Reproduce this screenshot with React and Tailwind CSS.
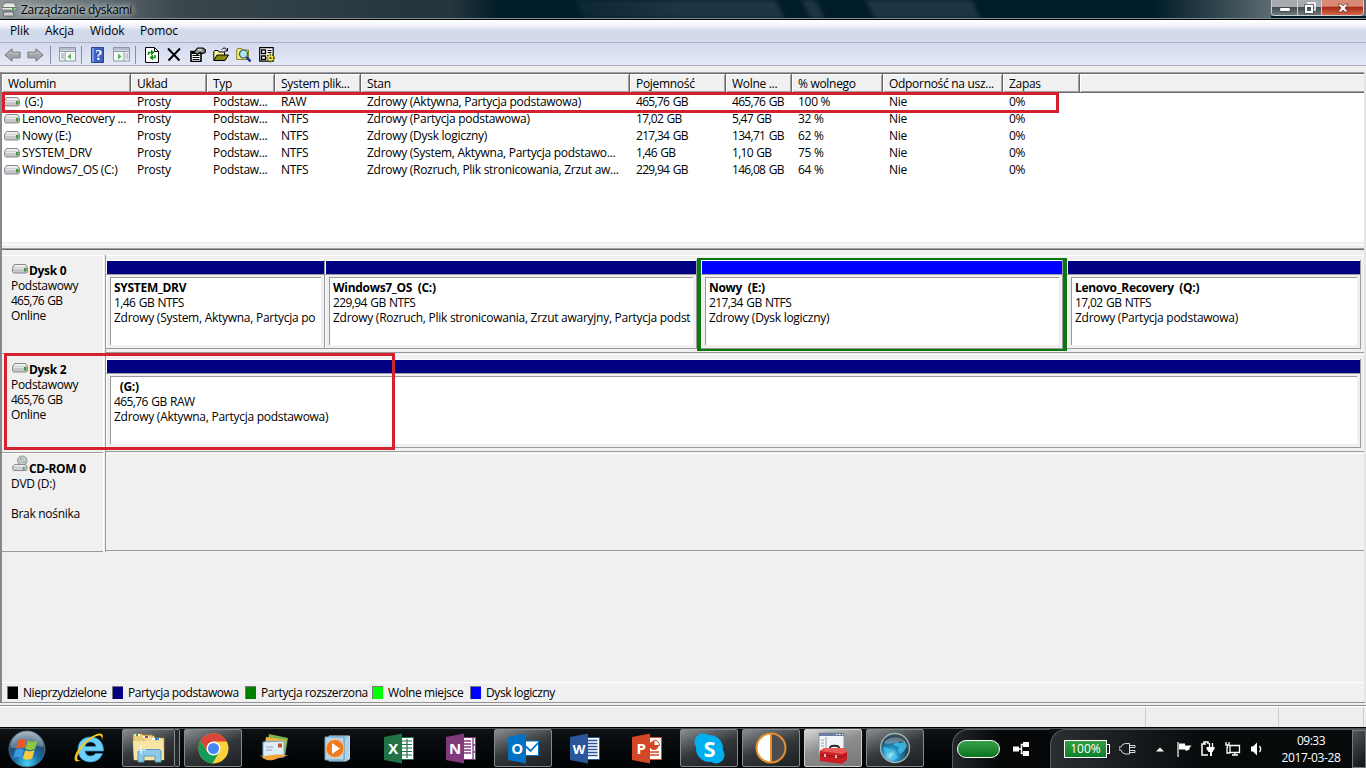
import React from "react";

const columns = [
  { title: "Wolumin", width: "w-[129px]" },
  { title: "Układ", width: "w-[76px]" },
  { title: "Typ", width: "w-[68px]" },
  { title: "System plik...", width: "w-[86px]" },
  { title: "Stan", width: "w-[269px]" },
  { title: "Pojemność", width: "w-[96px]" },
  { title: "Wolne ...", width: "w-[66px]" },
  { title: "% wolnego", width: "w-[91px]" },
  { title: "Odporność na usz...", width: "w-[120px]" },
  { title: "Zapas", width: "w-[77px]" },
];

const volumes = [
  ["\u00a0(G:)", "Prosty", "Podstaw...", "RAW", "Zdrowy (Aktywna, Partycja podstawowa)", "465,76 GB", "465,76 GB", "100 %", "Nie", "0%"],
  ["Lenovo_Recovery ...", "Prosty", "Podstaw...", "NTFS", "Zdrowy (Partycja podstawowa)", "17,02 GB", "5,47 GB", "32 %", "Nie", "0%"],
  ["Nowy (E:)", "Prosty", "Podstaw...", "NTFS", "Zdrowy (Dysk logiczny)", "217,34 GB", "134,71 GB", "62 %", "Nie", "0%"],
  ["SYSTEM_DRV", "Prosty", "Podstaw...", "NTFS", "Zdrowy (System, Aktywna, Partycja podstawo...", "1,46 GB", "1,10 GB", "75 %", "Nie", "0%"],
  ["Windows7_OS (C:)", "Prosty", "Podstaw...", "NTFS", "Zdrowy (Rozruch, Plik stronicowania, Zrzut aw...", "229,94 GB", "146,08 GB", "64 %", "Nie", "0%"],
];

const legend = [
  { label: "Nieprzydzielone", color: "bg-black", width: "w-[105px]" },
  { label: "Partycja podstawowa", color: "bg-[#000080]", width: "w-[133px]" },
  { label: "Partycja rozszerzona", color: "bg-[#008000]", width: "w-[127px]" },
  { label: "Wolne miejsce", color: "bg-[#00ff00]", width: "w-[98px]" },
  { label: "Dysk logiczny", color: "bg-[#0000ff]", width: "w-[120px]" },
];

const DriveIcon = () => (
  <svg width="16" height="10" viewBox="0 0 16 10" className="shrink-0">
    <path d="M2.500 .5h11l2 3v4l-1 1.500H1.500l-1-1.500v-4z" fill="#c6c6cb" stroke="#808085" strokeWidth=".9" />
    <path d="M3 1h10l1.500 2.300h-13z" fill="#ededee" />
    <path d="M1.500 4h12v1h-12z" fill="#e9e9ed" />
    <rect x="12" y="4" width="2.500" height="3.500" fill="#3f9a3c" />
  </svg>
);

const CdIcon = () => (
  <svg width="16" height="17" viewBox="0 0 17 17" className="shrink-0">
    <circle cx="11" cy="5.500" r="5" fill="#c8cdca" stroke="#8b908d" />
    <path d="M11 5.500L8 1.500M11 5.500l4 2" stroke="#7bb98a" strokeWidth="1.300" />
    <circle cx="11" cy="5.500" r="1.400" fill="#fff" stroke="#777" strokeWidth=".6" />
    <path d="M3 9.500h11l2 2v3l-1 1.500H2L.8 14.500V11.500z" fill="#cfcfd2" stroke="#77777c" strokeWidth=".9" />
    <path d="M3 10h10l1 1.500H2z" fill="#f5f5f5" />
    <rect x="11.500" y="12.500" width="2" height="2.500" fill="#2fa12f" />
  </svg>
);

const TitleBar = () => (
  <div className="flex h-5 shrink-0 flex-col border-b border-black bg-[#7f8f95]">
    <div className="flex h-[18px] overflow-hidden bg-[#011c29]">
      <div className="flex w-[450px] items-center bg-linear-to-r from-[#8f999c] via-[#3a474d] via-40% to-[#26363e] to-90% pl-0.5">
        <svg width="15" height="15" viewBox="0 0 15 15">
          <path d="M3 1h9l2 4v3H0V5z" fill="#e8e8e8" stroke="#666" strokeWidth=".7" />
          <path d="M0 5.500h14M2 10h9l1 4H1z" fill="#d4d4d4" stroke="#555" strokeWidth=".8" />
          <rect x="10" y="5.500" width="2.500" height="2" fill="#35a335" />
        </svg>
        <span className="relative top-px ml-1 [text-shadow:0_0_6px_#dfe5e6,0_0_5px_#c0c8ca,0_0_12px_#b0b8ba]">Zarządzanie dyskami</span>
      </div>
      <div className="w-[50px] bg-linear-to-r from-[#26363e] to-[#011c29]" />
      <div className="w-[80px]" />
      <div className="w-[200px] skew-x-[25deg] bg-linear-to-r from-[#0c2834] via-[#1c3642] to-[#1c3642] to-90% blur-[2px]" />
      <div className="w-[26px]" />
      <div className="w-[14px] skew-x-[25deg] bg-[#1c3642] blur-[2px]" />
      <div className="w-[50px]" />
      <div className="w-[106px] skew-x-[25deg] bg-[#1c3642] blur-[2px]" />
      <div className="grow bg-linear-to-r from-[#011c29] from-60% to-[#5d6b70]" />
      <div className="flex h-4 w-[95px] bg-[#5d6b70] pr-0.5">
        <div className="flex h-full grow overflow-hidden rounded-b border border-t-0 border-[#c9d0d2]">
          <div className="flex w-[26px] items-end justify-center border-r border-[#c9d0d2] bg-linear-to-b from-[#a5abae] from-45% via-[#444c50] via-50% to-[#6f7a7f] pb-[3px]">
            <div className="h-[5px] w-[12px] rounded-xs border border-[#42484c] bg-white" />
          </div>
          <div className="flex w-6 items-center justify-center border-r border-[#c9d0d2] bg-linear-to-b from-[#a5abae] from-45% via-[#444c50] via-50% to-[#6f7a7f]">
            <svg width="12" height="12" viewBox="0 0 12 12" fill="none">
              <path d="M4 2.500V1h7v7H9.500" stroke="#fff" strokeWidth="1.500" />
              <path d="M2 4h6v6H2z" stroke="#fff" strokeWidth="2" />
              <path d="M.5 2.500h9v9h-9z" stroke="#41474b" strokeWidth=".6" />
            </svg>
          </div>
          <div className="flex grow items-center justify-center bg-linear-to-b from-[#d98a77] from-40% via-[#a82a14] via-50% to-[#d5664a]">
            <svg width="12" height="10" viewBox="0 0 12 10">
              <path d="M1 1h3l2 2 2-2h3L8 5l3 4H8L6 7 4 9H1l3-4z" fill="#fff" stroke="#5a2f2a" strokeWidth=".7" />
            </svg>
          </div>
        </div>
      </div>
    </div>
  </div>
);

const Arrow = ({ flip }) => (
  <svg width="17" height="16" viewBox="0 0 18 16" className={flip ? "-scale-x-100" : ""}>
    <path d="M1 8l7.500-6.500V5H17v6H8.500v3.500z" fill="#a3a6a9" stroke="#6d7073" />
    <path d="M3.500 7.500L7.500 4v2.200H16" fill="none" stroke="#c9cbce" />
  </svg>
);

const PaneIcon = ({ right }) => (
  <svg width="17" height="15" viewBox="0 0 17 15">
    <path d="M.5.5h16v13.500H.5z" fill="#f6f8f9" stroke="#8e99a6" />
    <path d="M1 1h15v2.500H1z" fill="#b2bcc8" />
    <path d="M1 4.500h15" stroke="#8e99a6" />
    {right ? (
      <>
        <path d="M11 5v9M12.500 7h3M12.500 9h3M12.500 11h3" stroke="#8e99a6" />
        <path d="M5 6.500v6l3.500-3z" fill="#4cb748" />
      </>
    ) : (
      <>
        <path d="M6 5v9M2 7h3M2 9h3M2 11h3" stroke="#8e99a6" />
        <path d="M12 6.500v6L8.500 9.500z" fill="#4cb748" />
      </>
    )}
  </svg>
);

const Separator = () => <div className="h-[18px] w-px bg-[#8b90a0]" />;

const Toolbar = () => (
  <div className="flex h-[23px] shrink-0 items-center border-b border-[#a9aec4] bg-linear-to-b from-[#d3daee] to-[#e4e8f6] pt-px pl-1">
    <Arrow />
    <div className="mr-1.5 ml-1.5 flex"><Arrow flip /></div>
    <Separator />
    <div className="ml-[8px] mr-[5px]"><PaneIcon /></div>
    <Separator />
    <svg width="13" height="16" viewBox="0 0 13 16" className="ml-[9px]">
      <path d="M.5.5h12v15H.5z" fill="#3b62c4" stroke="#27458f" />
      <path d="M1 1h2v14H1z" fill="#7f9be0" />
      <text x="7.500" y="12.500" textAnchor="middle" fontSize="14" fontWeight="bold" fill="#fff" fontFamily="Liberation Serif, serif">?</text>
    </svg>
    <div className="mr-[5px] ml-[9px]"><PaneIcon right /></div>
    <Separator />
    <svg width="14" height="16" viewBox="0 0 14 16" className="ml-[9px]">
      <path d="M.5.5h9l4 4v11H.5z" fill="#fff" stroke="#000" />
      <path d="M9.500.5v4h4" fill="none" stroke="#000" />
      <path d="M3.500 8V5.500h3M10 8v2.500H7.500" fill="none" stroke="#169016" strokeWidth="1.500" />
      <path d="M6 2.500v6L9.500 5.500zM8 7.500v6L4.500 10.500z" fill="#169016" />
    </svg>
    <svg width="14" height="15" viewBox="0 0 14 15" className="ml-2">
      <path d="M1 1.500l11.500 12M13 1.500L1.500 13.500" stroke="#000" strokeWidth="1.900" />
    </svg>
    <svg width="16" height="15" viewBox="0 0 16 15" className="ml-[9px]">
      <path d="M1 4.500h10v10H1z" fill="#fff" stroke="#000" strokeWidth="1.600" />
      <path d="M1.500 5h9v2h-9z" />
      <path d="M2.500 8.500h7M2.500 10.500h7M2.500 12.500h7" stroke="#000" strokeWidth="1.200" />
      <path d="M4 5.500L7.500 1H13l2.500 2-.5 2.500-3 1-2-1-2.500 2z" fill="#8f8f8f" stroke="#000" strokeWidth="1.200" />
      <path d="M8 2.800h4" stroke="#fff" />
    </svg>
    <svg width="16" height="15" viewBox="0 0 16 15" className="ml-[7px]">
      <path d="M.8 13V4.500L2 3.500h3l1 1.500h5.500v3" fill="#fff9a0" stroke="#000" />
      <path d="M.8 13.500L4 8h11.500l-3.500 5.500z" fill="#8c8a16" stroke="#000" />
      <path d="M9 2.500c1-2 4-2 5 .5M14.500 1v3h-3" fill="none" stroke="#000" />
    </svg>
    <svg width="16" height="15" viewBox="0 0 16 15" className="ml-[7px]">
      <path d="M.7 12.500V3l1-1.500h4L7 3h5.500v9.500z" fill="#f2e98a" stroke="#8c8324" />
      <circle cx="7.500" cy="7" r="4" fill="#a9e6ee" stroke="#3d5257" strokeWidth="1.200" />
      <path d="M10.500 10l4 4.500" stroke="#1428a0" strokeWidth="2.400" />
    </svg>
    <svg width="17" height="16" viewBox="0 0 17 16" className="ml-[7px]">
      <path d="M.7.7h13.500v13.500H.7z" fill="#fff" stroke="#000" strokeWidth="1.200" />
      <path d="M2.500 3h4v3.500h-4zM2.500 9h4v3.500h-4z" fill="none" stroke="#000" strokeWidth="1.300" />
      <path d="M8.500 3.500h4M8.500 5.500h4" stroke="#000" strokeWidth="1.200" />
      <circle cx="11.500" cy="11" r="3.500" fill="#f2e640" stroke="#5c560d" strokeDasharray="1.500 1" strokeWidth="1.800" />
      <circle cx="11.500" cy="11" r="1.100" fill="#333" />
    </svg>
  </div>
);

const VolumeTable = () => (
  <div className="relative h-[170px] shrink-0 border-t border-[#a0a0a0] bg-white">
    <div className="flex h-5 border-t border-b border-[#696969] bg-[#f0f0f0] shadow-[inset_0_-1px_0_#a0a0a0]">
      {columns.map((col) => (
        <div
          key={col.title}
          className={`${col.width} shrink-0 border-r border-[#696969] pl-1.5 leading-[18px] whitespace-nowrap shadow-[inset_1px_1px_0_#fff,inset_-1px_-1px_0_#a0a0a0]`}
        >
          <span className="relative top-px">{col.title}</span>
        </div>
      ))}
      <div className="grow shadow-[inset_1px_1px_0_#fff,inset_0_-1px_0_#a0a0a0]" />
    </div>
    {volumes.map((row) => (
      <div key={row[0]} className="flex h-[17px] items-center leading-[17px]">
        {row.map((value, i) => (
          <div
            key={i}
            className={`${columns[i].width} flex shrink-0 items-center whitespace-nowrap ${i === 0 ? "pl-0.5" : "pl-1.5"} ${
              i === 5 || i === 6 ? "tracking-[-0.7px] [word-spacing:1px]" : "tracking-[-0.28px]"
            }`}
          >
            {i === 0 && <div className="mr-0.5"><DriveIcon /></div>}
            {value}
          </div>
        ))}
      </div>
    ))}
    <div className="absolute top-[19px] left-0 h-[21px] w-[1057px] border-3 border-[#d3212d]" />
  </div>
);

const Partition = ({ name, size, status, width, color = "bg-[#000080]" }) => (
  <div className={`${width} flex h-[89px] shrink-0 flex-col border-r border-b border-[#9a9a9c] shadow-[inset_1px_1px_0_#fff]`}>
    <div className={`mt-px ml-px h-[13px] shrink-0 ${color}`} />
    <div className="h-px shrink-0 bg-[#a0a0a0]" />
    <div className="mt-0.5 mr-[3px] mb-[3px] ml-1 grow overflow-hidden border-t border-l border-[#98989b] bg-white pt-0.5 pl-[3px] leading-[15px] whitespace-pre">
      <p className="font-bold tracking-[-0.3px]">{name}</p>
      <p className="tracking-[-0.6px] [word-spacing:1px]">{size}</p>
      <p className="tracking-[-0.27px]">{status}</p>
    </div>
  </div>
);

const DiskRow = ({ icon, name, lines, children }) => (
  <div className="flex h-[99px] shrink-0">
    <div className="w-[101px] shrink-0 border-t border-b border-t-white border-b-[#9a9a9c] pt-1.5 pl-[9px] leading-[15px]">
      <div className="flex h-4 items-end whitespace-nowrap">
        <div className="mr-px mb-1 ml-px">{icon}</div>
        <span className="font-bold tracking-[-0.3px]">{name}</span>
      </div>
      {lines.map((line, i) => (
        <p key={i} className={`h-[15px] ${line.endsWith("GB") ? "tracking-[-0.75px] [word-spacing:1px]" : ""}`}>{line}</p>
      ))}
    </div>
    <div className="w-[3px] shrink-0 border-r border-l border-r-[#9a9a9c] border-l-white" />
    <div className="mb-px flex grow items-start border-t border-b border-t-white border-b-[#9a9a9c] pt-1">{children}</div>
  </div>
);

const DiskGraph = () => (
  <div className="relative flex flex-col pt-[5px]">
    <DiskRow icon={<DriveIcon />} name="Dysk 0" lines={["Podstawowy", "465,76 GB", "Online"]}>
      <Partition width="w-[219px]" name="SYSTEM_DRV" size="1,46 GB NTFS" status="Zdrowy (System, Aktywna, Partycja po" />
      <Partition width="w-[372px]" name="Windows7_OS  (C:)" size="229,94 GB NTFS" status="Zdrowy (Rozruch, Plik stronicowania, Zrzut awaryjny, Partycja podst" />
      <div className="-mt-0.5 flex w-[370px] shrink-0 border-4 border-t-2 border-b-2 border-[#0b780f]">
        <Partition width="w-[362px]" color="bg-[#0000ff]" name="Nowy  (E:)" size="217,34 GB NTFS" status="Zdrowy (Dysk logiczny)" />
      </div>
      <Partition width="w-[294px]" name="Lenovo_Recovery  (Q:)" size="17,02 GB NTFS" status="Zdrowy (Partycja podstawowa)" />
    </DiskRow>
    <DiskRow icon={<DriveIcon />} name="Dysk 2" lines={["Podstawowy", "465,76 GB", "Online"]}>
      <Partition width="w-[1255px]" name="  (G:)" size="465,76 GB RAW" status="Zdrowy (Aktywna, Partycja podstawowa)" />
    </DiskRow>
    <DiskRow icon={<CdIcon />} name="CD-ROM 0" lines={["DVD (D:)", "", "Brak nośnika"]} />
    <div className="absolute top-[103px] left-0.5 h-[97px] w-[391px] border-3 border-[#d3212d]" />
  </div>
);

const TaskButton = ({ open, active, stacked, children }) => {
  let look = "";
  if (open) look = "border border-[#85898b] rounded-xs bg-linear-160 from-[#8a8e90] via-[#34383a] via-50% to-[#1d2022]";
  if (active) look = "border border-[#d0d0d0] rounded-xs bg-linear-160 from-[#d8d8d8] via-[#8d8d8d] via-45% to-[#777]";
  return (
    <div className="flex h-[38px] w-[58px] shrink-0">
      <div className={`flex grow items-center justify-center ${look}`}>{children}</div>
      {stacked && <div className="w-[5px] rounded-r-xs border border-l-0 border-[#85898b] bg-[#25282a]" />}
    </div>
  );
};

const OfficeIcon = ({ letter, color, kind }) => (
  <svg width="31" height="31" viewBox="0 0 31 31">
    {kind !== "mail" && <path d="M17 4.500h12.500v22H17z" fill="#fff" stroke={color} />}
    {kind === "grid" && <path d="M18 8h10M18 11.500h10M18 15h10M18 18.500h10M18 22h10M23 6v19" stroke={color} strokeWidth="1.200" />}
    {kind === "lines" && <path d="M18 7.500h9.500M18 10.500h9.500M18 13.500h9.500M18 16.500h9.500M18 19.500h9.500M18 22.500h9.500" stroke={color} strokeWidth="1.300" />}
    {kind === "note" && <path d="M18 8h7M18 11h7M18 14h7M18 17h7M18 20h7M27 5v21M27 12h3M27 19h3" stroke={color} strokeWidth="1.300" />}
    {kind === "slide" && (
      <>
        <path d="M18 19h9M18 22h9" stroke={color} strokeWidth="1.500" />
        <circle cx="22" cy="12.500" r="4.500" fill={color} />
        <path d="M22 12.500V7a5.500 5.500 0 0 1 5.500 5.500z" fill="#fff" stroke={color} />
      </>
    )}
    {kind === "mail" && (
      <>
        <path d="M17 8h13.500v14.500H17z" fill="#fff" stroke={color} />
        <path d="M18 13.500l4.500 4.500 7.500-8" fill="none" stroke={color} strokeWidth="1.800" />
      </>
    )}
    <path d="M0 4L18 .5v30L0 27z" fill={color} />
    <text x="9" y="21" textAnchor="middle" fontSize={letter === "W" ? 13 : 15} fontWeight="bold" fill="#fff" fontFamily="Open Sans, sans-serif">{letter}</text>
  </svg>
);

const StartOrb = () => (
  <svg width="38" height="38" viewBox="0 0 38 38">
    <defs>
      <radialGradient id="orb" cx=".5" cy=".9" r=".85">
        <stop offset="0" stopColor="#4cd3f5" />
        <stop offset=".4" stopColor="#1670a8" />
        <stop offset=".7" stopColor="#245074" />
        <stop offset="1" stopColor="#8797a3" />
      </radialGradient>
    </defs>
    <circle cx="19" cy="19" r="18" fill="url(#orb)" stroke="#4c6577" />
    <path d="M3 17a16 16 0 0 1 32 0c-9-4-20 5-32 0z" fill="#fff" opacity=".25" />
    <path d="M10 10.500c3-2 5.500-1.500 8.500-.3l-2.200 8.300c-2.800-1.200-5-1.500-8.300.2z" fill="#e9582a" />
    <path d="M19.800 10.800c3.500 1.500 6 1.500 9.500-.3l-2.300 8.500c-3.300 1.500-6.200 1.500-9.500 0z" fill="#8fc742" />
    <path d="M7.500 20c3.300-1.800 5.500-1.300 8.300-.2l-2.200 8.200c-2.800-1.200-5-1.500-8.300.3z" fill="#3f9be0" />
    <path d="M17.200 20.300c3.300 1.500 5.800 1.300 9.300-.2l-2.300 8.500c-3.300 1.500-6 1.300-9.300-.2z" fill="#fbc93d" />
  </svg>
);

const IeIcon = () => (
  <svg width="31" height="32" viewBox="0 0 31 32">
    <path d="M29.500 19H11c.3 3 2.500 5 5.500 5 2.300 0 4-1 5-2.500h7C26.800 26.500 22 30 16.500 30 9 30 4 25 4 17.500S9 5 16.500 5c7.800 0 13.300 5.500 13 14zM11 14.500h11c-.3-2.800-2.500-4.500-5.500-4.500s-5 1.700-5.500 4.500z" fill="#6bcff7" stroke="#2a93d4" strokeWidth=".7" />
    <path d="M28 8c1.500-4.500 1-7-2.500-6.500C17 2.500 4 14.500 1 24c-1.500 5 1 7 6 4-3 .8-4.500-.5-3.500-4C6.500 15 17 5 24.500 3.500c2.500-.5 3.500 1 3.500 4.500z" fill="#f8c71f" />
  </svg>
);

const ExplorerIcon = () => (
  <svg width="34" height="30" viewBox="0 0 34 30">
    <path d="M1 2l1-1h8l1 1h9l1 2v23H2z" fill="#e9cf7c" stroke="#b8963f" strokeWidth=".6" />
    <path d="M12 3h10l1 2h9v22H12z" fill="#f2dd93" stroke="#b8963f" strokeWidth=".6" />
    <path d="M3 2h5M11 4h6M20 6h8" stroke="#fff" strokeWidth="2" />
    <path d="M4 2h2" stroke="#36a13d" strokeWidth="2" />
    <path d="M13 4h3" stroke="#d33" strokeWidth="2" />
    <path d="M23 6h4" stroke="#2c84d8" strokeWidth="2" />
    <path d="M1 8h30l1 19H2z" fill="#f6e5a4" />
    <path d="M6 29V19c0-2 1-2.500 2.500-2.500h18c2 0 2.500 1 2.500 2.500v10h-6v-6H12v6z" fill="#8cc9e8" stroke="#5799bd" />
    <path d="M9 12v9M5 17h9" stroke="#fff" />
  </svg>
);

const ChromeIcon = () => (
  <svg width="31" height="31" viewBox="0 0 31 31">
    <circle cx="15.500" cy="15.500" r="15" fill="#fdd13a" />
    <path d="M15.500 8.500h13.300A15 15 0 0 0 2.500 8l6.700 11z" fill="#db4437" />
    <path d="M2.500 8a15 15 0 0 0 12 22.500l6.700-11.500-12 0z" fill="#109d58" />
    <circle cx="15.500" cy="15.500" r="7" fill="#fff" />
    <circle cx="15.500" cy="15.500" r="5.500" fill="#4687f4" />
  </svg>
);

const MailIcon = () => (
  <svg width="32" height="28" viewBox="0 0 32 28">
    <path d="M10 0l19 4-3 18-19-4z" fill="#78b64b" />
    <path d="M7 3l20 3-3 17-19-3z" fill="#f0b34b" />
    <path d="M4 8l21-1v16l-21 1z" fill="#dcecf8" stroke="#73a3cc" />
    <path d="M7 13h7M7 16h6" stroke="#8ba6bd" />
    <path d="M19 9.500h4v4h-4z" fill="#c9542b" />
    <path d="M0 21c8 3 15-3 30 1-9-1-14 6-22 4-4-1-3-3-8-5z" fill="#f0a53a" />
  </svg>
);

const PlayerIcon = () => (
  <svg width="27" height="27" viewBox="0 0 27 27">
    <path d="M5 1h20.500v23L22 26H5z" fill="#87b6d6" stroke="#b8dbef" />
    <path d="M22 3v22M24 2v22" stroke="#d9edf8" />
    <path d="M1 2h19v23H1z" fill="#b5d6eb" stroke="#6c9fc3" />
    <circle cx="11" cy="13.500" r="9" fill="#f07a1d" stroke="#fbc08a" />
    <path d="M8 8v11l8-5.500z" fill="#fff" />
  </svg>
);

const SkypeIcon = () => (
  <svg width="31" height="31" viewBox="0 0 31 31">
    <circle cx="9" cy="9" r="8.500" fill="#00aff0" />
    <circle cx="22" cy="22" r="8.500" fill="#00aff0" />
    <circle cx="15.500" cy="15.500" r="13.500" fill="#00aff0" />
    <text x="15.500" y="23.500" textAnchor="middle" fontSize="22" fontWeight="bold" fill="#fff" fontFamily="Open Sans, sans-serif">S</text>
  </svg>
);

const ContrastIcon = () => (
  <svg width="32" height="32" viewBox="0 0 32 32">
    <circle cx="16" cy="16" r="14.500" fill="#4c4b4d" />
    <path d="M16 1.500a14.500 14.500 0 0 0 0 29z" fill="#fff" />
    <path d="M16 1.500v29" stroke="#e58e2e" strokeWidth="2" />
    <circle cx="16" cy="16" r="14.500" fill="none" stroke="#e58e2e" strokeWidth="2" />
  </svg>
);

const ToolboxIcon = () => (
  <svg width="30" height="33" viewBox="0 0 30 33">
    <path d="M1 1h25v20H1z" fill="#f2f4f7" stroke="#8c96a8" />
    <path d="M1 1h25v3H1z" fill="#6d7d9e" />
    <path d="M18 2.500h1.500M21 2.500h1.500M24 2.500h1" stroke="#fff" />
    <path d="M8 5v16M3 8h3M3 11h3M3 14h3" stroke="#97a1b1" />
    <path d="M12 16c0-3 9-3 9 0v2" fill="none" stroke="#222" strokeWidth="1.800" />
    <path d="M2 19l4-3h20l3 4v8l-5 4-22-3z" fill="#c91f26" />
    <path d="M2 19l4-3h20l3 4-5 2z" fill="#ec5a54" />
    <path d="M2 23l22 2 5-3" fill="none" stroke="#8d1015" />
    <path d="M7 22v3M18 23v3" stroke="#eee" strokeWidth="1.500" />
  </svg>
);

const GlobeIcon = () => (
  <svg width="32" height="32" viewBox="0 0 32 32">
    <defs>
      <radialGradient id="globe" cx=".35" cy=".75" r=".75">
        <stop offset="0" stopColor="#a8efff" />
        <stop offset=".35" stopColor="#2394c6" />
        <stop offset=".75" stopColor="#23475a" />
        <stop offset="1" stopColor="#3f4f57" />
      </radialGradient>
    </defs>
    <circle cx="16" cy="16" r="14.500" fill="url(#globe)" stroke="#9eb1b9" strokeWidth="1.300" />
    <path d="M14 12l4-2 3 1 5-1 2 4-3 5-4 3-2-4 1-3-4-1zM4 15l5 1 3 3-2 3-4-2zM12 24l5-1 2 3-4 2z" fill="#3fc0ee" opacity=".85" />
    <path d="M5 11a12 9 0 0 1 22 0c-8-4-14 3-22 0z" fill="#dfe6e8" opacity=".35" />
  </svg>
);

const Taskbar = () => (
  <div className="flex h-10 shrink-0 border-t border-[#4a5254] bg-linear-to-b from-[#0e1214] to-[#010304] text-white shadow-[0_-1px_0_#000]">
    <div className="flex w-[60px] shrink-0 items-center pl-2"><StartOrb /></div>
    <div className="flex gap-1">
      <TaskButton><IeIcon /></TaskButton>
      <TaskButton open stacked><ExplorerIcon /></TaskButton>
      <TaskButton open><ChromeIcon /></TaskButton>
      <TaskButton><MailIcon /></TaskButton>
      <TaskButton><PlayerIcon /></TaskButton>
      <TaskButton><OfficeIcon letter="X" color="#217346" kind="grid" /></TaskButton>
      <TaskButton><OfficeIcon letter="N" color="#80397b" kind="note" /></TaskButton>
      <TaskButton open><OfficeIcon letter="O" color="#0072c6" kind="mail" /></TaskButton>
      <TaskButton><OfficeIcon letter="W" color="#2b579a" kind="lines" /></TaskButton>
      <TaskButton><OfficeIcon letter="P" color="#d24726" kind="slide" /></TaskButton>
      <TaskButton open><SkypeIcon /></TaskButton>
      <TaskButton open><ContrastIcon /></TaskButton>
      <TaskButton open active><ToolboxIcon /></TaskButton>
      <TaskButton open><GlobeIcon /></TaskButton>
    </div>
    <div className="ml-7 flex w-[98px] items-center rounded-tl-2xl border-t border-l border-[#575c5f] bg-linear-to-r from-[#24282a] to-[#050708] to-50% pl-1">
      <div className="h-[18px] w-[43px] rounded-full border-[1.5px] border-white bg-linear-to-b from-[#35a14b] to-[#087320]" />
      <svg width="17" height="14" viewBox="0 0 17 14" className="ml-[13px]">
        <path d="M0 4.500h6v5H0zM10 0h6v5h-6zM10 9h6v5h-6z" fill="#fff" />
        <path d="M5 7h3.500M11 2.500H8.500v9H11" fill="none" stroke="#fff" strokeWidth="1.500" />
      </svg>
    </div>
    <div className="flex grow items-center rounded-tl-2xl border-t border-l border-[#575c5f] bg-linear-to-r from-[#2b2f31] to-[#070a0b] to-50% pl-[13px]">
      <div className="flex h-[18px] w-[43px] shrink-0 items-center justify-center border-[1.5px] border-white bg-linear-to-b from-[#2f9e46] to-[#08802a] tracking-normal">100%</div>
      <div className="h-2.5 w-[3px] border border-l-0 border-white" />
      <svg width="17" height="12" viewBox="0 0 17 12" className="ml-[9px]" fill="none" stroke="#d8d8d8">
        <path d="M10.500 .5H6.500a5 5 0 0 0-4.500 3.500H0v3h2a5 5 0 0 0 4.500 4h4zM10.500 2.500H16v2h-5.500M10.500 7.500H16v2h-5.500" />
      </svg>
      <svg width="8" height="5" viewBox="0 0 8 5" className="ml-5"><path d="M0 4.500L4 .5l4 4z" fill="#fff" /></svg>
      <svg width="15" height="15" viewBox="0 0 15 15" className="ml-[13px]">
        <path d="M1 0v15" stroke="#fff" strokeWidth="1.200" />
        <path d="M2 1.500h6v2h6.500L12.500 6v1.500L9 9 8 7.500H2z" fill="#fff" />
      </svg>
      <svg width="14" height="16" viewBox="0 0 14 16" className="ml-[9px]">
        <path d="M5 3H1v11h6M3 3V1h4v2" fill="none" stroke="#fff" strokeWidth="1.500" />
        <path d="M8.500 2v4M11.500 2v4" stroke="#fff" strokeWidth="1.300" />
        <path d="M5.500 6h8v2.500H13L11.500 11H11v4H9v-4H7.500L6 8.500h-.5z" fill="#fff" />
      </svg>
      <svg width="16" height="16" viewBox="0 0 16 16" className="ml-[10px]">
        <path d="M5 4.500h9.500v7H5zM7 14h6M10 12v2M2 6v6h3M1 1v3h3V1M2.500 4v3" fill="none" stroke="#fff" strokeWidth="1.300" />
      </svg>
      <svg width="13" height="14" viewBox="0 0 13 14" className="ml-[10px]">
        <path d="M0 4.500h2L6 .5v13L2 9.500H0z" fill="#fff" />
        <path d="M8.500 4c1.500 2 1.500 4 0 6" fill="none" stroke="#fff" strokeWidth="1.300" />
      </svg>
      <div className="ml-auto w-[82px] text-center leading-[17px] tracking-[-0.5px]">
        <p>09:33</p>
        <p className="tracking-[-0.35px]">2017-03-28</p>
      </div>
      <div className="h-[38px] w-3.5 shrink-0 border border-[#74797b] bg-linear-135 from-[#51565a] to-[#101314]" />
    </div>
  </div>
);

export default function App() {
  return (
    <div className="flex h-[768px] w-[1366px] flex-col overflow-hidden bg-[#f0f0f0] font-['Open_Sans',sans-serif] text-[12px] tracking-[-0.3px] text-black">
      <TitleBar />
      <div className="flex h-[23px] shrink-0 items-center border-b border-[#adb2c8] bg-linear-to-b from-white from-5% via-[#e9ecf8] via-35% to-[#d3daec] to-45% pl-2.5 tracking-[-0.1px]">
        <span className="w-[35px]">Plik</span>
        <span className="w-[45px]">Akcja</span>
        <span className="w-[50px]">Widok</span>
        <span>Pomoc</span>
      </div>
      <Toolbar />
      <div className="mt-1.5 flex h-[631px] shrink-0 flex-col border-r-2 border-b border-l-2 border-r-[#e5e5e5] border-b-[#929294] border-l-[#88888a]">
        <VolumeTable />
        <div className="flex h-[8px] shrink-0 flex-col justify-between border-b border-[#696969] bg-[#f0f0f0]">
          <div className="mt-0.5 h-px bg-white" />
          <div className="h-px bg-[#a0a0a0]" />
        </div>
        <DiskGraph />
        <div className="mt-auto flex h-[20px] shrink-0 items-center border-t border-white pl-[5px] tracking-[-0.42px]">
          {legend.map((item) => (
            <div key={item.label} className={`${item.width} flex shrink-0 items-center whitespace-nowrap`}>
              <div className={`mr-[5px] h-[13px] w-[11px] border-t border-l border-[#77777a] ${item.color}`} />
              {item.label}
            </div>
          ))}
        </div>
      </div>
      <div className="mt-0.5 flex h-[23px] shrink-0 justify-end border-t border-[#8e8e90] bg-[#f0eded] pt-px shadow-[inset_0_1px_0_#fff]">
        <div className="w-[133px] border-l border-[#cfcccc]" />
        <div className="w-[85px] border-l border-[#cfcccc]" />
        <div className="w-[3px] border-l border-[#cfcccc]" />
      </div>
      <Taskbar />
    </div>
  );
}
